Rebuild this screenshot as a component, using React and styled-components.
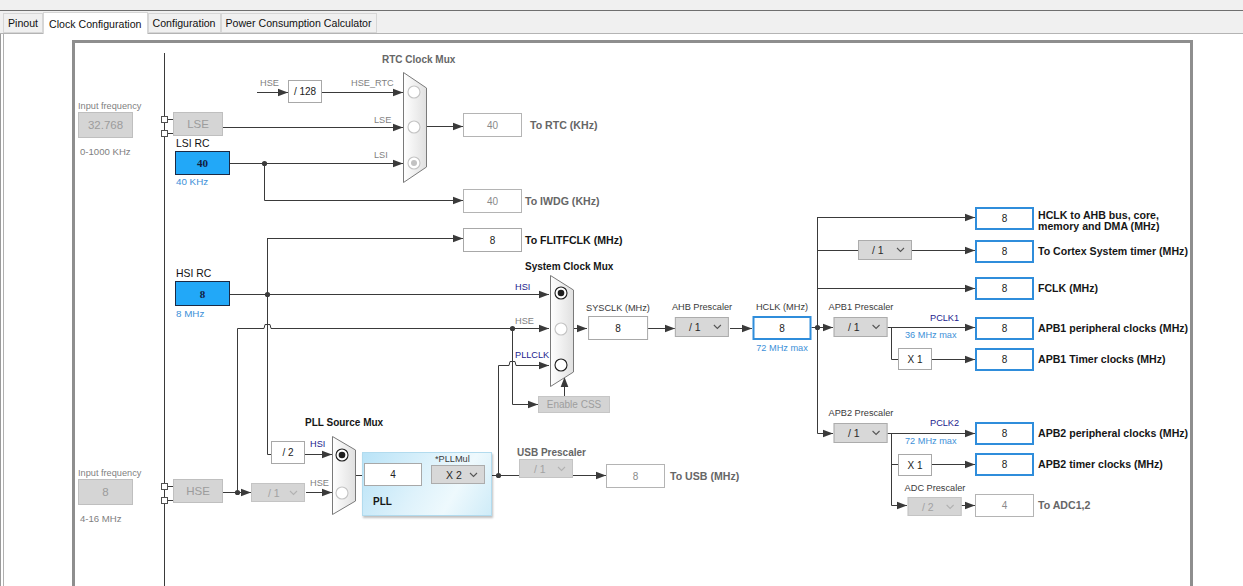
import React from 'react';
import styled, { createGlobalStyle, css } from 'styled-components';

const OX = 75;
const OY = 43;

const Global = createGlobalStyle`
  html, body { margin: 0; padding: 0; overflow: hidden; background: #fff; }
  body { font-family: "Liberation Sans", Arial, sans-serif; }
`;

const Window = styled.div`
  width: 1243px;
  height: 586px;
  display: flex;
  flex-direction: column;
  background: #fff;
  overflow: hidden;
`;

const TitleStrip = styled.div`
  flex: none;
  height: 10px;
  background: #f0f0f0;
  border-bottom: 1px solid #6f6f6f;
`;

const TabBar = styled.div`
  flex: none;
  height: 22px;
  background: #f0f0f0;
  border-bottom: 1px solid #b4b4b4;
  display: flex;
  align-items: flex-end;
  padding-left: 3px;
`;

const Tab = styled.div`
  box-sizing: border-box;
  height: ${p => (p.$active ? 22 : 20)}px;
  margin-bottom: ${p => (p.$active ? -1 : 0)}px;
  padding: 0 ${p => (p.$active ? 5 : 4)}px;
  display: flex;
  align-items: center;
  font-size: 10.6px;
  color: #111;
  background: ${p => (p.$active ? '#fff' : '#f0f0f0')};
  border: 1px solid #d6d6d6;
  border-bottom: ${p => (p.$active ? 'none' : '1px solid #d6d6d6')};
`;

const Content = styled.div`
  flex: 1;
  display: flex;
  border-left: 1px solid #9a9a9a;
  min-height: 0;
`;

const Frame = styled.div`
  flex: 1;
  margin-left: 2px;
  border-left: 1px solid #b0b0b0;
  padding: 6px 0 0 68px;
  display: flex;
  align-items: flex-start;
  min-height: 0;
`;

const Canvas = styled.div`
  flex: none;
  position: relative;
  width: 1115px;
  height: 560px;
  border: 3px solid #8e8e8e;
  border-bottom: none;
  background: #fff;
`;

const WireLayer = styled.svg`
  position: absolute;
  left: 0;
  top: 0;
`;

/* a node of the diagram: its place on the canvas is the content */
const place = css`
  position: absolute;
  left: ${p => p.$x - OX}px;
  top: ${p => p.$y - OY}px;
`;

const tones = {
  gray: '#7f7f7f',
  dark: '#3a3a3a',
  black: '#161616',
  blue: '#3d90d8',
  navy: '#1c1c8e',
  mid: '#666',
};

const boxKinds = {
  input: css`
    background: #22a8f8;
    border: 1px solid #1b2a45;
    color: #13203e;
    font-weight: bold;
    font-family: "Liberation Serif", "Times New Roman", serif;
    font-size: 11px;
  `,
  output: css`
    background: #fff;
    border: 2px solid #2f8ddb;
    color: #222;
  `,
  plain: css`
    background: #fff;
    border: 1px solid #a8a8a8;
    color: #222;
  `,
  faded: css`
    background: #fff;
    border: 1px solid #b4b4b4;
    color: #8a8a8a;
  `,
  disabled: css`
    background: #d5d5d5;
    border: 1px solid #bfbfbf;
    color: #9c9c9c;
    font-size: 11.5px;
  `,
};

const Box = styled.div`
  flex: none;
  box-sizing: border-box;
  width: ${p => p.$w || 59}px;
  height: ${p => p.$h || 24}px;
  display: flex;
  align-items: center;
  justify-content: center;
  font-size: 10px;
  ${p => boxKinds[p.$kind || 'plain']}
`;

const PlacedBox = styled(Box)`
  ${place}
`;

const CssButton = styled.div`
  ${place}
  box-sizing: border-box;
  width: 72px;
  height: 17px;
  display: flex;
  align-items: center;
  justify-content: center;
  font-size: 10px;
  color: #9e9e9e;
  background: #d4d4d4;
  border: 1px solid #c6c6c6;
`;

const Dropdown = styled.div`
  flex: none;
  box-sizing: border-box;
  width: 54px;
  height: ${p => p.$h || 20}px;
  margin-left: ${p => p.$ml || 0}px;
  display: flex;
  align-items: center;
  justify-content: space-between;
  padding: 0 6px 0 ${p => p.$pl || 13}px;
  font-size: 10.5px;
  background: ${p => (p.$off ? '#d5d5d5' : '#d8d8d8')};
  border: 1px solid ${p => (p.$off ? '#c4c4c4' : '#acacac')};
  color: ${p => (p.$off ? '#a2a2a2' : '#2a2a2a')};
`;

const PlacedDropdown = styled(Dropdown)`
  ${place}
`;

const Chevron = styled.svg`
  flex: none;
  stroke: ${p => (p.$off ? '#b2b2b2' : '#555')};
`;

const Caption = styled.span`
  display: block;
  line-height: 12px;
  white-space: nowrap;
  font-size: ${p => p.$size || 9.2}px;
  color: ${p => tones[p.$tone || 'gray']};
  padding-left: ${p => p.$pl || 0}px;
  margin-top: ${p => p.$mt || 0}px;
`;

/* caption pinned to a wire: x = left edge, y = text centre */
const WireCaption = styled(Caption)`
  position: absolute;
  left: ${p => p.$x - OX}px;
  top: ${p => p.$y - OY - 6}px;
`;

const NameLabel = styled(Caption)`
  font-size: 10.4px;
  color: #111;
`;

const Title = styled(Caption)`
  font-size: 10px;
  font-weight: bold;
`;

const PlacedTitle = styled(Title)`
  position: absolute;
  left: ${p => p.$x - OX}px;
  top: ${p => p.$y - OY - 6}px;
`;

const OutName = styled.span`
  line-height: 11px;
  white-space: nowrap;
  font-size: 10.6px;
  font-weight: bold;
  color: ${p => tones[p.$tone || 'black']};
  ${p => p.$top !== undefined && css`
    align-self: flex-start;
    margin-top: ${p.$top}px;
  `}
`;

/* source block: caption above, value box, caption below */
const SourceStack = styled.div`
  ${place}
  display: flex;
  flex-direction: column;
  align-items: flex-start;
`;

/* stage: label centred over its box */
const Stage = styled.div`
  position: absolute;
  left: ${p => p.$cx - OX}px;
  top: ${p => p.$y - OY}px;
  transform: translateX(-50%);
  display: flex;
  flex-direction: column;
  align-items: center;
  gap: ${p => p.$gap || 3}px;
`;

/* output: value box with its name to the right */
const OutRow = styled.div`
  ${place}
  display: flex;
  align-items: center;
  gap: ${p => p.$gap || 4}px;
`;

const PllPanel = styled.div`
  ${place}
  box-sizing: border-box;
  width: 130px;
  height: 64px;
  padding-left: 1px;
  display: grid;
  grid-template-columns: 58px 55px;
  column-gap: 9px;
  align-items: start;
  background: linear-gradient(120deg, #b9e3f7 0%, #def2fb 45%, #eef9fd 70%, #cfecf8 100%);
  border: 1px solid #b2dbee;
  box-shadow: 1px 2px 2px rgba(0, 0, 0, 0.25);
`;

const PllColumn = styled.div`
  display: flex;
  flex-direction: column;
  padding-top: ${p => p.$pt || 0}px;
`;

const MuxSvg = styled.svg`
  position: absolute;
  left: ${p => p.$x - OX}px;
  top: ${p => p.$y - OY}px;
  overflow: visible;
`;

function ChevronIcon({ off }) {
  return (
    <Chevron $off={off} width="9" height="6" viewBox="0 0 9 6" fill="none" strokeWidth="1.1">
      <polyline points="1,1 4.5,4.5 8,1" />
    </Chevron>
  );
}

function Select({ value, off, h, pl, ml }) {
  return (
    <Dropdown $off={off} $h={h} $pl={pl} $ml={ml}>
      <span>{value}</span>
      <ChevronIcon off={off} />
    </Dropdown>
  );
}

function Mux({ id, x, y, w, h, inset, cx, circles }) {
  return (
    <MuxSvg $x={x} $y={y} width={w} height={h} viewBox={`0 0 ${w} ${h}`}>
      <defs>
        <linearGradient id={id} x1="0" x2="1" y1="0" y2="0">
          <stop offset="0" stopColor="#ffffff" />
          <stop offset="1" stopColor="#e0e0e0" />
        </linearGradient>
      </defs>
      <polygon
        points={`0.5,0.5 ${w - 0.5},${inset} ${w - 0.5},${h - inset} 0.5,${h - 0.5}`}
        fill={`url(#${id})`}
        stroke="#7a7a7a"
      />
      {circles.map(([cy, state]) => {
        const ring = state === 'on' || state === 'off' ? '#1e1e1e' : '#c4c4c4';
        return (
          <g key={cy}>
            <circle cx={cx} cy={cy} r="6" fill="#fff" stroke={ring} strokeWidth="1.1" />
            {state === 'on' && <circle cx={cx} cy={cy} r="3.3" fill="#1e1e1e" />}
            {state === 'dim' && <circle cx={cx} cy={cy} r="3" fill="#c2c2c2" />}
          </g>
        );
      })}
    </MuxSvg>
  );
}

const wires = [
  'M164.5 53 V600',
  'M167 119.5 H173', 'M167 133.5 H173', 'M167 486.5 H173', 'M167 500.5 H173',
  'M223 127.5 H403',
  'M257 92.5 H288', 'M322 92.5 H403',
  'M229 163.5 H403',
  'M264.5 163 V200.5 H463',
  'M427 126.5 H463',
  'M229 294.5 H549',
  'M267.5 238 V454.5 H271',
  'M267 238.5 H463',
  'M237.5 492 V328.5 H264 L265 324.5 H270 L271 328.5 H549',
  'M223 492.5 H251',
  'M306 492.5 H332',
  'M305 454.5 H332',
  'M356 475.5 H363',
  'M421 475.5 H431',
  'M486 475.5 H519',
  'M498.5 475 V365.5 H509 L510 361.5 H515 L516 365.5 H549',
  'M512.5 328 V404.5 H538',
  'M564.5 396 V380',
  'M573 328.5 H587',
  'M647 328.5 H675',
  'M730 328.5 H752',
  'M811 327.5 H833',
  'M817.5 217 V433.5 H833',
  'M817 217.5 H975',
  'M817 250.5 H858', 'M912 250.5 H975',
  'M817 288.5 H975',
  'M887 327.5 H975',
  'M891.5 327 V359.5 H898', 'M932 359.5 H975',
  'M887 433.5 H975',
  'M891.5 433 V505.5 H907',
  'M891 464.5 H898', 'M932 464.5 H975',
  'M961 505.5 H975',
  'M573 475.5 H606',
];

const arrowsRight = [
  [403, 127.5], [288, 92.5], [403, 92.5], [403, 163.5], [463, 200.5], [463, 126.5],
  [549, 294.5], [463, 238.5], [549, 328.5], [251, 492.5], [332, 492.5], [332, 454.5],
  [549, 365.5], [538, 404.5], [587, 328.5], [675, 328.5], [752, 328.5], [833, 327.5],
  [975, 217.5], [975, 250.5], [975, 288.5], [833, 433.5], [975, 327.5], [975, 359.5],
  [975, 433.5], [907, 505.5], [975, 464.5], [975, 505.5], [606, 475.5],
];

const dots = [
  [264.5, 163.5], [267.5, 294.5], [237.5, 492.5], [498.5, 475.5], [512.5, 328.5], [817.5, 327.5],
];

const connectors = [[161, 116], [161, 130], [161, 483], [161, 497]];

function Wires() {
  return (
    <WireLayer width="1115" height="560" viewBox={`${OX} ${OY} 1115 560`}>
      <g fill="none" stroke="#3a3a3a" strokeWidth="1">
        {wires.map(d => <path key={d} d={d} />)}
      </g>
      <g fill="#3a3a3a">
        {arrowsRight.map(([x, y]) => (
          <polygon key={`${x}-${y}`} points={`${x - 10},${y - 3.8} ${x},${y} ${x - 10},${y + 3.8}`} />
        ))}
        <polygon points="560.7,387 564.5,377 568.3,387" />
        {dots.map(([x, y]) => <circle key={`${x}-${y}`} cx={x} cy={y} r="2.6" />)}
      </g>
      <g fill="#fff" stroke="#505050">
        {connectors.map(([x, y]) => <rect key={`${x}-${y}`} x={x + 0.5} y={y + 0.5} width="6" height="6" />)}
      </g>
    </WireLayer>
  );
}

const outputs = [
  { y: 206, h: 23, name: <>HCLK to AHB bus, core,<br />memory and DMA (MHz)</>, top: 3.5 },
  { y: 240, h: 23, name: 'To Cortex System timer (MHz)' },
  { y: 277, h: 23, name: 'FCLK (MHz)' },
  { y: 317, h: 23, name: 'APB1 peripheral clocks (MHz)' },
  { y: 348, h: 23, name: 'APB1 Timer clocks (MHz)' },
  { y: 422, h: 23, name: 'APB2 peripheral clocks (MHz)' },
  { y: 453, h: 23, name: 'APB2 timer clocks (MHz)' },
];

export default function App() {
  return (
    <Window>
      <Global />
      <TitleStrip />
      <TabBar>
        <Tab>Pinout</Tab>
        <Tab $active>Clock Configuration</Tab>
        <Tab>Configuration</Tab>
        <Tab>Power Consumption Calculator</Tab>
      </TabBar>
      <Content>
        <Frame>
          <Canvas>
            <Wires />

            {/* Low speed sources */}
            <SourceStack $x={78} $y={100}>
              <Caption>Input frequency</Caption>
              <Box $kind="disabled" $w={55} $h={26}>32.768</Box>
              <Caption $size={9.6} $pl={2} $mt={8}>0-1000 KHz</Caption>
            </SourceStack>
            <PlacedBox $kind="disabled" $x={173} $y={112} $w={50} $h={24}>LSE</PlacedBox>
            <SourceStack $x={175} $y={138}>
              <NameLabel $pl={1}>LSI RC</NameLabel>
              <Box $kind="input" $w={55} $h={24} style={{ marginTop: 1 }}>40</Box>
              <Caption $tone="blue" $size={9.8} $pl={1} $mt={1}>40 KHz</Caption>
            </SourceStack>

            {/* RTC */}
            <PlacedTitle $x={382} $y={60} $tone="mid">RTC Clock Mux</PlacedTitle>
            <WireCaption $x={260} $y={83}>HSE</WireCaption>
            <PlacedBox $kind="plain" $x={288} $y={80} $w={34} $h={23}>/ 128</PlacedBox>
            <WireCaption $x={351} $y={83}>HSE_RTC</WireCaption>
            <WireCaption $x={374} $y={120}>LSE</WireCaption>
            <WireCaption $x={374} $y={155}>LSI</WireCaption>
            <Mux id="rtcmux" x={403} y={72} w={24} h={111} inset={16} cx={11}
              circles={[[20, 'faded'], [55, 'faded'], [91, 'dim']]} />
            <OutRow $x={463} $y={113} $gap={8}>
              <Box $kind="faded">40</Box>
              <OutName $tone="mid">To RTC (KHz)</OutName>
            </OutRow>
            <OutRow $x={463} $y={189} $gap={3}>
              <Box $kind="faded">40</Box>
              <OutName $tone="mid">To IWDG (KHz)</OutName>
            </OutRow>
            <OutRow $x={463} $y={228} $gap={3}>
              <Box $kind="plain">8</Box>
              <OutName>To FLITFCLK (MHz)</OutName>
            </OutRow>

            {/* HSI */}
            <SourceStack $x={175} $y={268}>
              <NameLabel $pl={1}>HSI RC</NameLabel>
              <Box $kind="input" $w={55} $h={25} style={{ marginTop: 1 }}>8</Box>
              <Caption $tone="blue" $size={9.8} $pl={1} $mt={2}>8 MHz</Caption>
            </SourceStack>

            {/* System clock mux */}
            <PlacedTitle $x={525} $y={267} $tone="black">System Clock Mux</PlacedTitle>
            <WireCaption $x={515} $y={287} $tone="navy">HSI</WireCaption>
            <WireCaption $x={515} $y={321}>HSE</WireCaption>
            <WireCaption $x={515} $y={355} $tone="navy">PLLCLK</WireCaption>
            <Mux id="sysmux" x={550} y={275} w={24} h={112} inset={15} cx={11}
              circles={[[18, 'on'], [54, 'faded'], [90, 'off']]} />
            <CssButton $x={538} $y={396}>Enable CSS</CssButton>

            <Stage $cx={618} $y={302} $gap={2}>
              <Caption $tone="dark">SYSCLK (MHz)</Caption>
              <Box $kind="plain" $w={60}>8</Box>
            </Stage>
            <Stage $cx={702} $y={301} $gap={4}>
              <Caption $tone="dark">AHB Prescaler</Caption>
              <Select value="/ 1" />
            </Stage>
            <Stage $cx={782} $y={301} $gap={3}>
              <Caption $tone="dark">HCLK (MHz)</Caption>
              <Box $kind="output">8</Box>
              <Caption $tone="blue" $mt={-1}>72 MHz max</Caption>
            </Stage>

            {/* AHB outputs */}
            <PlacedDropdown $x={858} $y={240} $pl={13}>
              <span>/ 1</span>
              <ChevronIcon />
            </PlacedDropdown>
            {outputs.map(o => (
              <OutRow key={o.y} $x={975} $y={o.y}>
                <Box $kind="output" $h={o.h}>8</Box>
                <OutName $top={o.top}>{o.name}</OutName>
              </OutRow>
            ))}

            {/* APB1 */}
            <Stage $cx={861} $y={301} $gap={4}>
              <Caption $tone="dark">APB1 Prescaler</Caption>
              <Select value="/ 1" />
            </Stage>
            <WireCaption $x={930} $y={318} $tone="navy">PCLK1</WireCaption>
            <WireCaption $x={905} $y={335} $tone="blue">36 MHz max</WireCaption>
            <PlacedBox $kind="plain" $x={898} $y={348} $w={34} $h={22}>X 1</PlacedBox>

            {/* APB2 */}
            <Stage $cx={861} $y={407} $gap={4}>
              <Caption $tone="dark">APB2 Prescaler</Caption>
              <Select value="/ 1" />
            </Stage>
            <WireCaption $x={930} $y={423} $tone="navy">PCLK2</WireCaption>
            <WireCaption $x={905} $y={441} $tone="blue">72 MHz max</WireCaption>
            <PlacedBox $kind="plain" $x={898} $y={454} $w={34} $h={22}>X 1</PlacedBox>
            <Stage $cx={935} $y={482} $gap={3}>
              <Caption $tone="dark">ADC Prescaler</Caption>
              <Select value="/ 2" off h={19} />
            </Stage>
            <OutRow $x={975} $y={494}>
              <Box $kind="faded" $h={23}>4</Box>
              <OutName $tone="mid">To ADC1,2</OutName>
            </OutRow>

            {/* HSE & PLL */}
            <SourceStack $x={78} $y={467}>
              <Caption>Input frequency</Caption>
              <Box $kind="disabled" $w={55} $h={26}>8</Box>
              <Caption $size={9.6} $pl={2} $mt={8}>4-16 MHz</Caption>
            </SourceStack>
            <PlacedBox $kind="disabled" $x={173} $y={479} $w={50} $h={24}>HSE</PlacedBox>
            <PlacedDropdown $x={251} $y={483} $off $h={19} $pl={16}>
              <span>/ 1</span>
              <ChevronIcon off />
            </PlacedDropdown>
            <PlacedBox $kind="plain" $x={271} $y={441} $w={34} $h={23}>/ 2</PlacedBox>
            <PlacedTitle $x={305} $y={423} $tone="black">PLL Source Mux</PlacedTitle>
            <WireCaption $x={310} $y={444} $tone="navy">HSI</WireCaption>
            <WireCaption $x={310} $y={483}>HSE</WireCaption>
            <Mux id="pllmux" x={332} y={436} w={24} h={79} inset={14} cx={10}
              circles={[[19, 'on'], [57, 'faded']]} />
            <PllPanel $x={362} $y={452}>
              <PllColumn $pt={10}>
                <Box $kind="plain" $w={58} $h={23}>4</Box>
                <Title $tone="black" $pl={9} $mt={10}>PLL</Title>
              </PllColumn>
              <PllColumn>
                <Caption $tone="dark" $pl={4}>*PLLMul</Caption>
                <Select value="X 2" h={19} pl={14} ml={0} />
              </PllColumn>
            </PllPanel>

            {/* USB */}
            <SourceStack $x={517} $y={447}>
              <Title $tone="mid">USB Prescaler</Title>
              <Select value="/ 1" off h={19} pl={14} ml={2} />
            </SourceStack>
            <OutRow $x={606} $y={464} $gap={5}>
              <Box $kind="faded">8</Box>
              <OutName $tone="mid">To USB (MHz)</OutName>
            </OutRow>
          </Canvas>
        </Frame>
      </Content>
    </Window>
  );
}
